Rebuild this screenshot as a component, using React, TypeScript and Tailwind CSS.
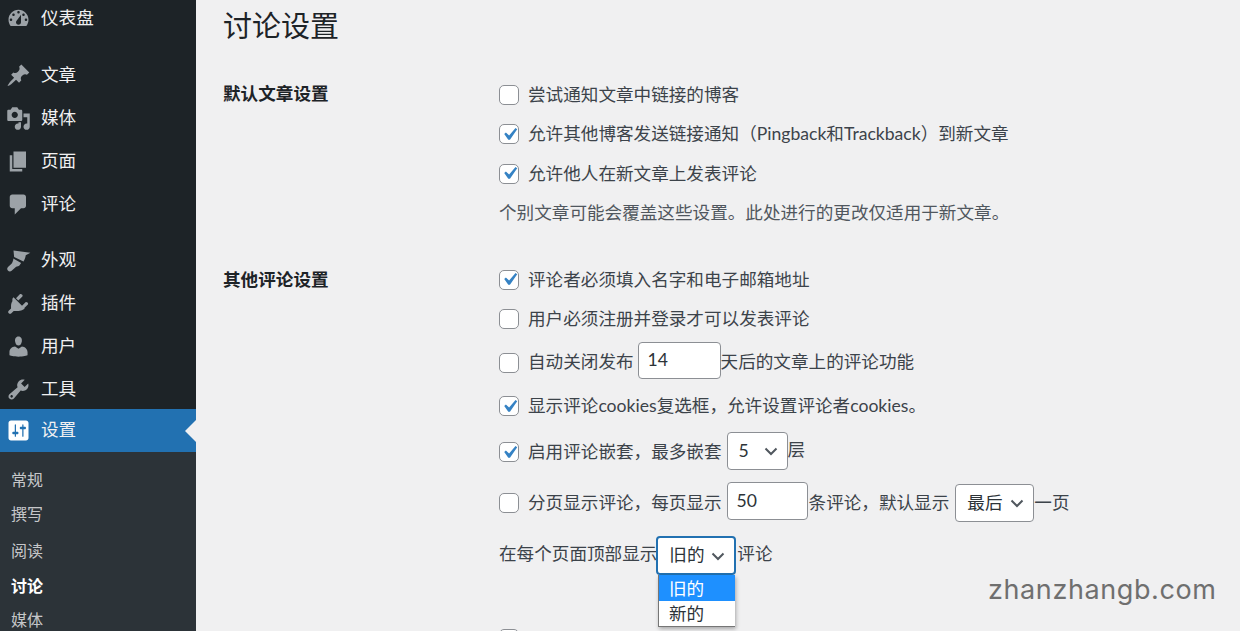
import React from "react";

const cjk = "font-['Lato','Noto_Sans_CJK_SC',sans-serif]";
const ic = "w-[25px] h-[25px]";

function Gauge() {
  return (
    <svg viewBox="0 0 20 20" className={ic} fill="#9ca2a7">
      <path fillRule="evenodd" d="M3.760 16h12.480c1.100-1.370 1.760-3.100 1.760-5 0-4.420-3.580-8-8-8s-8 3.580-8 8c0 1.900.66 3.630 1.760 5zM10 4c.55 0 1 .45 1 1s-.45 1-1 1-1-.45-1-1 .45-1 1-1zM6 6c.55 0 1 .45 1 1s-.45 1-1 1-1-.45-1-1 .45-1 1-1zm8 0c.55 0 1 .45 1 1s-.45 1-1 1-1-.45-1-1 .45-1 1-1zm-5.370 5.550L12 7v6c0 1.100-.9 2-2 2s-2-.9-2-2c0-.57.25-1.080.63-1.450zM4 10c.55 0 1 .45 1 1s-.45 1-1 1-1-.45-1-1 .45-1 1-1zm12 0c.55 0 1 .45 1 1s-.45 1-1 1-1-.45-1-1 .45-1 1-1z" />
    </svg>
  );
}
function Pin() {
  return (
    <svg viewBox="0 0 20 20" className={ic} fill="#9ca2a7">
      <path d="M10.440 3.020l1.820-1.820 6.360 6.350-1.830 1.820c-1.050-.68-2.480-.57-3.410.36l-.75.75c-.92.93-1.040 2.350-.35 3.410l-1.830 1.820-2.410-2.410-2.800 2.790c-.42.42-3.380 2.710-3.800 2.290s1.860-3.390 2.280-3.810l2.790-2.790L4.100 9.360l1.830-1.820c1.050.69 2.480.57 3.400-.36l.75-.75c.93-.92 1.050-2.350.36-3.410z" />
    </svg>
  );
}
function MediaIcon() {
  return (
    <svg viewBox="0 0 20 20" className={ic} fill="#9ca2a7">
      <path d="M13 11V4c0-.55-.45-1-1-1h-1.670L9 1H5L3.670 3H2c-.55 0-1 .45-1 1v7c0 .55.45 1 1 1h10c.55 0 1-.45 1-1zM7 4.500c1.380 0 2.500 1.120 2.500 2.500S8.380 9.500 7 9.500 4.500 8.380 4.500 7 5.620 4.500 7 4.500zM14 6h5v10.500c0 1.380-1.120 2.500-2.500 2.500S14 17.880 14 16.500s1.120-2.500 2.500-2.500c.17 0 .34.020.5.050V9h-3V6zm-4 8.050V13h2v3.500c0 1.380-1.120 2.500-2.500 2.500S7 17.880 7 16.500 8.120 14 9.500 14c.17 0 .34.020.5.050z" />
    </svg>
  );
}
function Pages() {
  return (
    <svg viewBox="0 0 20 20" className={ic} fill="#9ca2a7">
      <path d="M6 15V2h10v13H6zm-1 1h8v2H3V5h2v11z" />
    </svg>
  );
}
function Comment() {
  return (
    <svg viewBox="0 0 20 20" className={ic} fill="#9ca2a7">
      <path d="M5 2h9c1.100 0 2 .9 2 2v7c0 1.100-.9 2-2 2h-2l-5 5v-5H5c-1.100 0-2-.9-2-2V4c0-1.100.9-2 2-2z" />
    </svg>
  );
}
function Brush() {
  return (
    <svg viewBox="0 0 20 20" className={ic} fill="#9ca2a7">
      <path d="M6 2l13.500 1.800-3.700 1.900c-.3 1.800-.8 3.300-1.800 5L6.500 7.200zM5.800 8.300l6.300 3.700-1.400 1.900c-.6.700-1.600.5-2.600 1L4.500 18.200c-1 .9-2.300.6-3-.2s-.8-2 .1-2.900l3-2.700c.8-.9.700-2.100 1.200-2.800z" />
    </svg>
  );
}
function Plug() {
  return (
    <svg viewBox="0 0 20 20" className={ic} fill="#9ca2a7">
      <path d="M13.110 4.360L9.870 7.600 8 5.730l3.240-3.240c.35-.34 1.050-.2 1.560.32.52.51.66 1.210.31 1.550zm-8 1.770l.91-1.120 9.010 9.010-1.190.84c-.71.71-2.630 1.160-3.820 1.160H6.140L4.310 17.850c-.59.59-1.540.59-2.120 0-.59-.58-.59-1.530 0-2.120l1.830-1.830v-1.900c0-1.190.38-3.160 1.090-3.870zm12.400 4.680l-3.240 3.240-1.870-1.870 3.240-3.240c.34-.35 1.040-.21 1.550.31.52.51.66 1.210.32 1.560z" />
    </svg>
  );
}
function User() {
  return (
    <svg viewBox="0 0 20 20" className={ic} fill="#9ca2a7">
      <path d="M10 9.250c-2.270 0-2.730-3.440-2.730-3.440C7 4.020 7.820 2 9.970 2c2.160 0 2.980 2.020 2.710 3.810 0 0-.41 3.440-2.680 3.440zm0 2.570L12.720 10c2.390 0 4.520 2.330 4.520 4.530v2.490s-3.650 1.130-7.240 1.130c-3.650 0-7.240-1.130-7.240-1.130v-2.490c0-2.250 1.940-4.480 4.470-4.480z" />
    </svg>
  );
}
function Wrench() {
  return (
    <svg viewBox="0 0 20 20" className={ic} fill="#9ca2a7">
      <path d="M16.680 9.770c-1.340 1.340-3.300 1.670-4.950.99l-5.410 6.520c-.99.99-2.590.99-3.580 0s-.99-2.590 0-3.570l6.520-5.420c-.68-1.650-.35-3.610.99-4.950 1.280-1.280 3.120-1.620 4.720-1.060l-2.890 2.890 2.820 2.820 2.860-2.870c.53 1.580.18 3.390-1.080 4.650zM3.810 16.210c.4.390 1.030.39 1.420 0 .4-.4.400-1.030 0-1.430-.39-.39-1.020-.39-1.420 0-.39.4-.39 1.030 0 1.430z" />
    </svg>
  );
}
function Settings() {
  return (
    <svg viewBox="0 0 20 20" className={ic} fill="#ffffff">
      <path fillRule="evenodd" d="M18 16V4c0-1.100-.9-2-2-2H4c-1.100 0-2 .9-2 2v12c0 1.100.9 2 2 2h12c1.100 0 2-.9 2-2zM8 11h1c.55 0 1 .45 1 1s-.45 1-1 1H8v1.500c0 .28-.22.500-.5.500s-.5-.22-.5-.5V13H6c-.55 0-1-.45-1-1s.45-1 1-1h1V5.500c0-.28.22-.5.500-.5s.5.220.5.500V11zm5-2h-1c-.55 0-1-.45-1-1s.45-1 1-1h1V5.500c0-.28.22-.5.500-.5s.5.220.5.500V7h1c.55 0 1 .45 1 1s-.45 1-1 1h-1v5.500c0 .28-.22.500-.5.500s-.5-.22-.5-.5V9z" />
    </svg>
  );
}

function MenuItem({ icon, label, current, className = "" }: { icon: React.ReactNode; label: string; current?: boolean; className?: string }) {
  return (
    <div className={`relative flex items-center h-[43px] pl-[6px] ${current ? "bg-[#2271b1]" : ""} ${className}`}>
      <span className="w-[25px] mr-[10px] flex justify-center items-center shrink-0">{icon}</span>
      <span className="text-[17.6px] text-[#f0f0f1]">{label}</span>
      {current && (
        <span className="absolute right-0 top-1/2 -translate-y-1/2 border-y-[11px] border-y-transparent border-r-[11px] border-r-[#f0f0f1]" />
      )}
    </div>
  );
}

function Sidebar() {
  return (
    <aside className="w-[196px] shrink-0 bg-[#1d2327] h-[631px] overflow-hidden">
      <div className="-mt-[3.5px]">
        <MenuItem icon={<Gauge />} label="仪表盘" />
      </div>
      <div className="mt-[14px]">
        <MenuItem icon={<Pin />} label="文章" />
        <MenuItem icon={<MediaIcon />} label="媒体" />
        <MenuItem icon={<Pages />} label="页面" />
        <MenuItem icon={<Comment />} label="评论" />
      </div>
      <div className="mt-[13px]">
        <MenuItem icon={<Brush />} label="外观" />
        <MenuItem icon={<Plug />} label="插件" />
        <MenuItem icon={<User />} label="用户" />
        <MenuItem icon={<Wrench />} label="工具" />
        <MenuItem icon={<Settings />} label="设置" current className="-mt-[1.5px]" />
      </div>
      <div className="bg-[#2c3338] pt-[10px] h-[200px] text-[16px] text-[#f0f0f1cc] pl-[11px]">
        <div className="h-[35px] flex items-center">常规</div>
        <div className="h-[35px] -mt-[1px] flex items-center">撰写</div>
        <div className="h-[35px] mt-[2px] flex items-center">阅读</div>
        <div className="h-[35px] flex items-center font-bold text-white">讨论</div>
        <div className="h-[35px] -mt-[1px] flex items-center">媒体</div>
      </div>
    </aside>
  );
}

function Check({ checked }: { checked?: boolean }) {
  return (
    <span className="shrink-0 w-[20px] h-[20px] rounded-[5px] border border-[#8c8f94] bg-white flex items-center justify-center mr-[9px]">
      {checked && (
        <svg viewBox="0 0 20 20" className="w-[25px] h-[25px] shrink-0">
          <path d="M14.830 4.890l1.340.940-5.810 8.380H9.020L5.780 9.670l1.340-1.250 2.570 2.400z" fill="#3582c4" />
        </svg>
      )}
    </span>
  );
}

function Chevron() {
  return (
    <svg viewBox="0 0 16 16" className="w-[16px] h-[16px] shrink-0" fill="none" stroke="#50575e" strokeWidth="2">
      <path d="M2.500 5.500L8 11l5.500-5.500" />
    </svg>
  );
}

function Select({ label, className, focus }: { label: string; className: string; focus?: boolean }) {
  return (
    <span
      className={`inline-flex items-center justify-between rounded-[4px] bg-white pr-[8px] text-[#2c3338] ${
        focus ? "border-2 border-[#2271b1] pl-[11px]" : "border border-[#8c8f94] pl-[11px]"
      } ${className}`}
    >
      {label}
      <Chevron />
    </span>
  );
}

function NumInput({ value, className }: { value: string; className: string }) {
  return (
    <span className={`inline-flex items-center rounded-[4px] border border-[#8c8f94] bg-white pl-[9px] text-[#2c3338] ${className}`}>
      {value}
    </span>
  );
}

function Row({ h, children }: { h: string; children: React.ReactNode }) {
  return <div className={`flex items-center whitespace-nowrap ${h}`}>{children}</div>;
}

export default function App() {
  return (
    <div className={`flex h-[631px] w-[1240px] overflow-hidden bg-[#f0f0f1] ${cjk}`}>
      <Sidebar />
      <main className="relative flex-1 min-w-0 pl-[28px] text-[17.6px] text-[#3c434a]">
        <h1 className="-ml-[1px] h-[52px] flex items-center text-[29px] text-[#1d2327] font-normal">讨论设置</h1>

        <section className="flex mt-[23px]">
          <div className="-ml-[1px] w-[276px] shrink-0 font-bold text-[#1d2327] text-[17.6px] leading-[38px]">默认文章设置</div>
          <div className="flex-1 text-[17.6px]">
            <Row h="h-[39.5px]"><Check />尝试通知文章中链接的博客</Row>
            <Row h="h-[39.5px]"><Check checked />允许其他博客发送链接通知（Pingback和Trackback）到新文章</Row>
            <Row h="h-[39.5px]"><Check checked />允许他人在新文章上发表评论</Row>
            <Row h="h-[39px] text-[#50575e]">个别文章可能会覆盖这些设置。此处进行的更改仅适用于新文章。</Row>
          </div>
        </section>

        <section className="flex mt-[27.5px]">
          <div className="-ml-[1px] w-[276px] shrink-0 font-bold text-[#1d2327] text-[17.6px] leading-[39px]">其他评论设置</div>
          <div className="flex-1">
            <Row h="h-[39.5px]"><Check checked />评论者必须填入名字和电子邮箱地址</Row>
            <Row h="h-[39.5px]"><Check />用户必须注册并登录才可以发表评论</Row>
            <Row h="h-[47px]"><Check />自动关闭发布<NumInput value="14" className="w-[83px] h-[37px] ml-[4px] mb-[5px]" />天后的文章上的评论功能</Row>
            <Row h="h-[40px]"><Check checked />显示评论cookies复选框，允许设置评论者cookies。</Row>
            <Row h="h-[52px]"><Check checked />启用评论嵌套，最多嵌套<Select label="5" className="w-[61px] h-[38px] ml-[5px] mb-[2px]" /><span className="-mt-[4px]">层</span></Row>
            <Row h="h-[50px]"><Check />分页显示评论，每页显示<NumInput value="50" className="w-[81px] h-[38px] ml-[5px] mb-[4px]" /><span className="ml-[1px]">条评论，默认显示</span><Select label="最后" className="w-[79px] h-[38px] ml-[6px]" />一页</Row>
            <Row h="h-[53px]">在每个页面顶部显示<Select label="旧的" className="w-[80px] h-[39px] -ml-[1px] mt-[2px] mr-[1px]" focus />评论</Row>
          </div>
        </section>

        <section className="flex mt-[38.5px]">
          <div className="-ml-[1px] w-[276px] shrink-0 font-bold text-[#1d2327] text-[17.6px] leading-[39.5px]">发送邮件通知</div>
          <div className="flex-1 h-[39.5px] flex items-center"><Check /></div>
        </section>

        <div className="absolute left-[462px] top-[575px] w-[77px] h-[52px] bg-white border-l border-b border-[#767676] shadow-[1px_2px_4px_rgba(0,0,0,0.3)] text-[17.6px] text-[#2c3338]">
          <div className="h-[26px] pl-[10px] pt-[2px] bg-[#1e90ff] text-white flex items-center">旧的</div>
          <div className="h-[26px] pl-[10px] flex items-center">新的</div>
        </div>

        <div className="absolute left-[792px] top-[572px] text-[27px] tracking-[0.6px] text-[#6f6f6f] font-['Inter',sans-serif] leading-[36px]">zhanzhangb.com</div>
      </main>
    </div>
  );
}
